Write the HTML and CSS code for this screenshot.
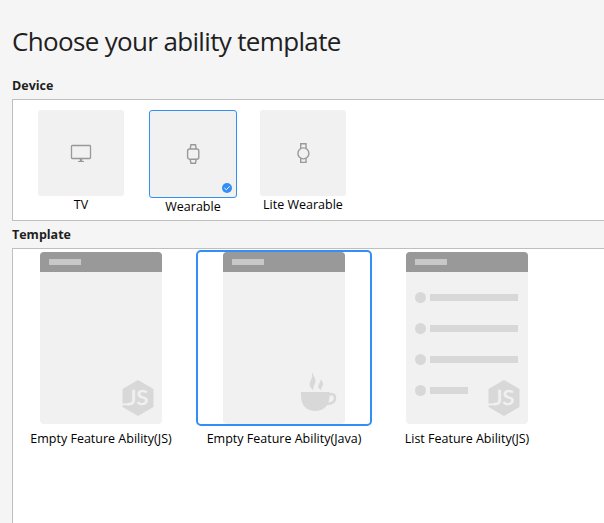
FILE: index.html
```html
<!DOCTYPE html>
<html lang="en">
<head>
<meta charset="utf-8">
<title>Choose your ability template</title>
<link rel="stylesheet" href="styles.css">
</head>
<body>
<main class="wizard">
  <h1 class="title">Choose your ability template</h1>
  <h2 class="heading">Device</h2>
  <section class="panel devices">
    <div class="device">
      <div class="tile">
        <svg width="22" height="20" viewBox="0 0 22 20" fill="none" stroke="#999"><rect x="1.5" y="2.5" width="19" height="13" rx=".8" stroke-width="1.3"/><path d="M11 16v2" stroke-width="2.5"/><path d="M8 18.5h6"/></svg>
      </div>
      <span class="label">TV</span>
    </div>
    <div class="device">
      <div class="tile selected">
        <svg width="14" height="22" viewBox="0 0 14 22" fill="none" stroke="#999" stroke-width="1.4"><rect x="1.6" y="6" width="11.2" height="10.2" rx="2"/><path d="M4.2 6 4.9 1.8H9.5L10.2 6M4.2 16.2 4.9 20.3H9.5L10.2 16.2"/></svg>
        <svg class="check" width="10" height="10" viewBox="0 0 10 10"><circle cx="5" cy="5" r="5" fill="#318ff7"/><path d="M2.4 4.9 4.3 6.7 7.7 3.4" fill="none" stroke="#fff"/></svg>
      </div>
      <span class="label">Wearable</span>
    </div>
    <div class="device">
      <div class="tile">
        <svg width="14" height="22" viewBox="0 0 14 22" fill="none" stroke="#999" stroke-width="1.4"><circle cx="7.4" cy="11.4" r="5.5"/><path d="M4.7 6.5V1.8H10V6.5M4.7 16.2V20.4H10V16.2"/></svg>
      </div>
      <span class="label">Lite Wearable</span>
    </div>
  </section>
  <h2 class="heading second">Template</h2>
  <section class="panel templates">
    <div class="template">
      <div class="frame"><div class="page"><div class="bar"><i></i></div>
        <svg class="js-icon" width="32" height="36" viewBox="0 0 32 36"><path d="M16 0 31.5 9V27L16 36 .5 27V9Z" fill="#d8d8d8"/><path d="M0 24.4H8.5" stroke="#f1f1f1" stroke-width="1.7"/><text x="5.2" y="25" textLength="21" lengthAdjust="spacingAndGlyphs">JS</text></svg></div></div>
      <span class="label">Empty Feature Ability(JS)</span>
    </div>
    <div class="template">
      <div class="frame chosen"><div class="page"><div class="bar"><i></i></div>
        <svg class="cup" width="36" height="39" viewBox="0 0 36 39" fill="#d8d8d8"><path d="M0 19H28.5V23C28.5 33 22 38 14.2 38S0 33 0 23Z"/><path d="M27.5 22.2C31 19.8 34 21.4 34 25S31 31 25.5 31" fill="none" stroke="#d8d8d8" stroke-width="2.5"/><path stroke="#d8d8d8" stroke-width=".9" d="M11.5 .5C12 3.5 14.5 5.5 14 9C13.5 12 11.5 13 12 16.5C9.5 14.5 8.5 12.5 9.3 10C10.2 7 12 5 11.5 .5ZM20 7C20.5 8.5 22 9.5 21.4 12C21 14 19.5 14.5 19.8 16.5C18 15.5 17.3 14 18 12C18.6 10 20.2 9 20 7Z"/></svg></div></div>
      <span class="label">Empty Feature Ability(Java)</span>
    </div>
    <div class="template">
      <div class="frame"><div class="page"><div class="bar"><i></i></div>
        <ul class="rows"><li></li><li></li><li></li><li class="short"></li></ul>
        <svg class="js-icon" width="32" height="36" viewBox="0 0 32 36"><path d="M16 0 31.5 9V27L16 36 .5 27V9Z" fill="#d8d8d8"/><path d="M0 24.4H8.5" stroke="#f1f1f1" stroke-width="1.7"/><text x="5.2" y="25" textLength="21" lengthAdjust="spacingAndGlyphs">JS</text></svg></div></div>
      <span class="label">List Feature Ability(JS)</span>
    </div>
  </section>
</main>
</body>
</html>
```

FILE: styles.css
```css
* { box-sizing: border-box; }
body {
  margin: 0;
  background: #f5f5f5;
  color: #1f1f1f;
  font-family: "Open Sans", "Noto Sans", sans-serif;
  overflow: hidden;
}
.wizard { display: flex; flex-direction: column; height: 523px; padding-left: 12px; }
.title { margin: 0; padding-top: 23px; height: 76px; font-size: 26px; line-height: 36px; font-weight: 400; letter-spacing: -.66px; white-space: nowrap; }
.heading { margin: 0; height: 23px; font-size: 12.5px; line-height: 20px; font-weight: 700; }
.second { height: 27px; padding-top: 4px; }
.panel { background: #fff; border: 1px solid #bfbfbf; border-right: 0; display: flex; align-items: flex-start; }
.devices { height: 122px; padding: 10px 0 0 25px; gap: 25px; }
.device:nth-child(3) { margin-left: -2px; }
.device, .template { display: flex; flex-direction: column; align-items: center; }
.tile { position: relative; width: 86px; height: 86px; border-radius: 3px; background: #f1f1f1; display: flex; align-items: center; justify-content: center; }
.selected { width: 88px; height: 88px; border: 1px solid #318ff7; }
.check { position: absolute; right: 4px; bottom: 4px; }
.label { color: #000; font-size: 12.5px; line-height: 18px; white-space: nowrap; }
.templates { flex: 1; border-bottom: 0; padding: 1px 0 0 0; gap: 7px; }
.template { width: 176px; }
.frame { width: 176px; height: 176px; border: 2px solid transparent; border-radius: 5px; display: flex; justify-content: center; }
.chosen { border-color: #318ff7; }
.page { position: relative; width: 122px; height: 172px; border-radius: 4px; overflow: hidden; background: #f1f1f1; }
.bar { height: 20px; padding: 7px 9px; background: #999; }
.bar i { display: block; width: 32px; height: 6px; background: #c8c8c8; }
.js-icon { position: absolute; left: 81.5px; bottom: 8px; }
.js-icon text { font-family: Lato, sans-serif; font-size: 21px; fill: #f1f1f1; stroke: #f1f1f1; stroke-width: .5px; }
.cup { position: absolute; left: 78px; top: 121px; }
.rows { margin: 0; padding: 20px 0 0 9px; list-style: none; display: flex; flex-direction: column; gap: 20px; }
.rows li { display: flex; align-items: center; gap: 4px; height: 11px; }
.rows li::before { content: ""; width: 11px; height: 11px; border-radius: 50%; background: #d8d8d8; }
.rows li::after { content: ""; width: 88px; height: 7px; background: #d8d8d8; }
.rows .short::after { width: 38px; }
.template .label { margin-top: 4px; }
```
